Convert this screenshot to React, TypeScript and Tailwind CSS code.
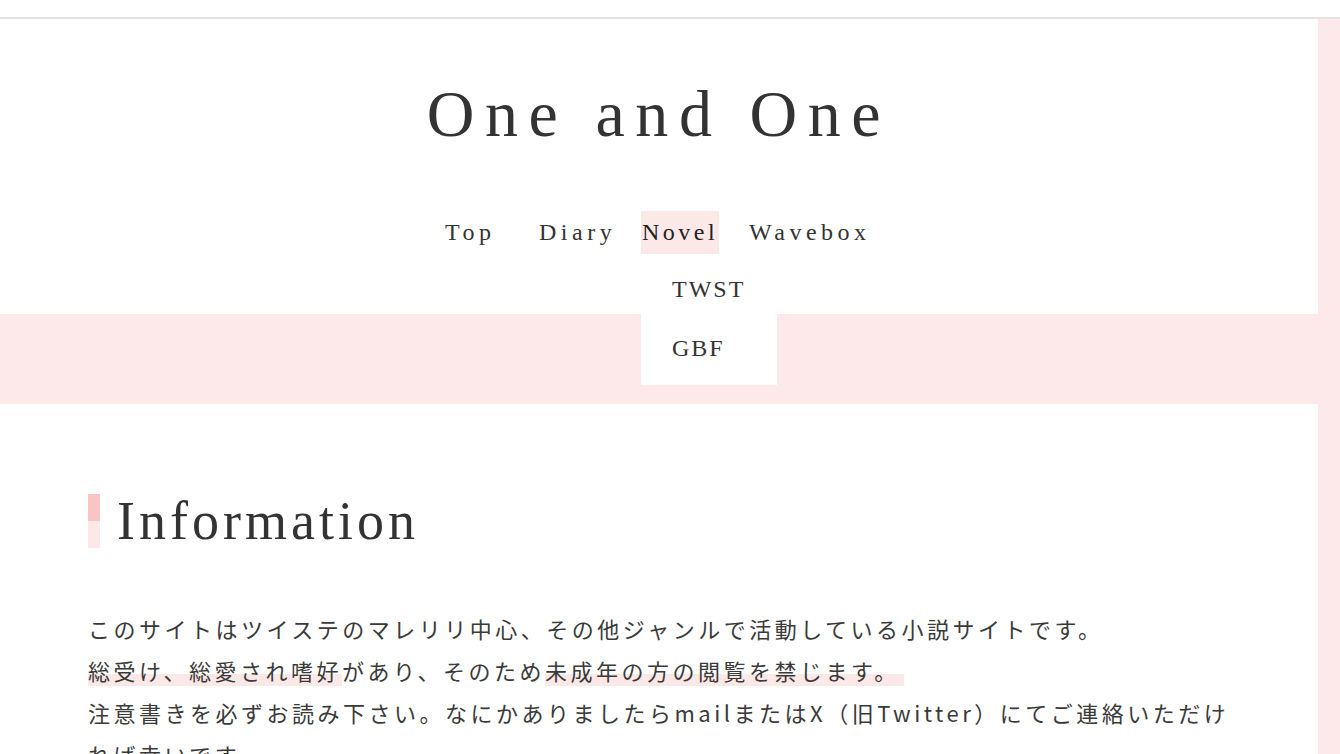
import React from "react";

const serif = { fontFamily: '"Liberation Serif", "Times New Roman", serif' };
const jp = { fontFamily: '"Noto Sans CJK JP", "Noto Sans", sans-serif' };

export default function App() {
  return (
    <div className="h-[754px] w-full overflow-hidden bg-white text-[#333]">
      <div className="h-[17px] bg-white" />
      <div className="h-[2px] bg-[#e3e3e3]" />
      <div className="flex">
        <main className="w-[1318px] shrink-0 bg-white">
          <header className="relative h-[295px]" style={serif}>
            <h1 className="pt-[62px] text-center text-[66px] leading-none tracking-[0.16em] text-[#333]">
              One and One
            </h1>
            <nav className="mt-[64px] flex pl-[445px] text-[24px] tracking-[4.5px] text-[#333]">
              <div className="w-[94px] h-[43px] leading-[43px]">Top</div>
              <div className="w-[102px] h-[43px] leading-[43px]">Diary</div>
              <div className="relative w-[78px] h-[43px] leading-[43px] bg-[#fde8e8] pl-[1px] tracking-[3.5px] text-[#222]">
                Novel
                <div className="absolute left-0 top-[43px] z-10 w-[136px] bg-white pt-[6px] pb-[7px] pl-[31px] tracking-[2px] text-[#333]">
                  <div className="h-[59px] leading-[59px]">TWST</div>
                  <div className="h-[59px] leading-[59px]">GBF</div>
                </div>
              </div>
              <div className="ml-[30px] h-[43px] leading-[43px]">Wavebox</div>
            </nav>
          </header>
          <div className="h-[90px] bg-[#fde9e9]" />
          <section className="px-[88px] pt-[90px]">
            <div className="flex items-center">
              <div className="flex w-[12px] flex-col">
                <div className="h-[27px] bg-[#fbc4c4]" />
                <div className="h-[27px] bg-[#fde8e8]" />
              </div>
              <h2
                className="ml-[17px] h-[54px] text-[54px] leading-[54px] tracking-[4px] text-[#333]"
                style={serif}
              >
                Information
              </h2>
            </div>
            <p
              className="mt-[59px] text-[22px] leading-[42px] tracking-[3.5px] text-[#3a3a3a]"
              style={jp}
            >
              このサイトはツイステのマレリリ中心、その他ジャンルで活動している小説サイトです。
              <br />
              <span className="bg-[linear-gradient(transparent_64%,#fde8e8_64%)]">総受け、総愛され嗜好</span>
              があり、そのため
              <span className="bg-[linear-gradient(transparent_64%,#fde8e8_64%)] pr-[4px]">未成年の方の閲覧を禁じます。</span>
              <br />
              注意書きを必ずお読み下さい。なにかありましたらmailまたはX（旧Twitter）にてご連絡いただければ幸いです。
            </p>
          </section>
        </main>
        <aside className="h-[735px] flex-1 bg-[#fde9e9]" />
      </div>
    </div>
  );
}
